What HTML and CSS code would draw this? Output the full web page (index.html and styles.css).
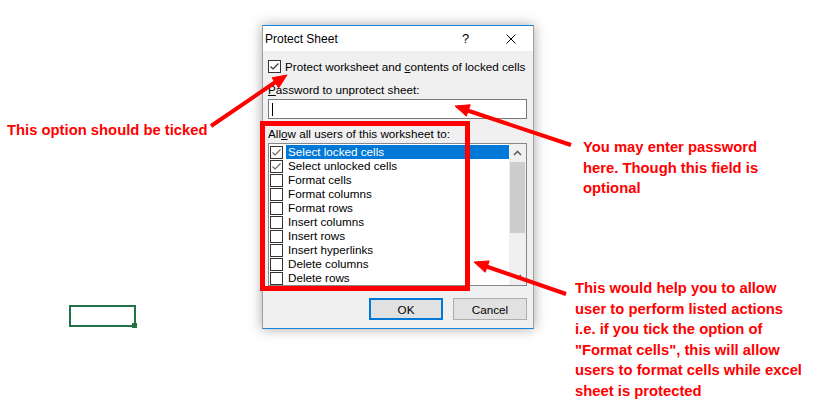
FILE: index.html
```html
<!DOCTYPE html>
<html>
<head>
<meta charset="utf-8">
<link rel="stylesheet" href="styles.css">
</head>
<body>
<div class="canvas">
  <div class="cell"><span class="handle"></span></div>

  <div class="dialog">
    <div class="titlebar">
      <span class="title">Protect Sheet</span>
      <span class="tbtn help">?</span>
      <span class="tbtn close"><svg width="10" height="10" viewBox="0 0 10 10"><path d="M0.5 0.5 L9.5 9.5 M9.5 0.5 L0.5 9.5" stroke="#000" stroke-width="1"/></svg></span>
    </div>
    <div class="body">
      <div class="topcheck">
        <span class="cb dark"><svg width="11" height="11" viewBox="0 0 11 11"><polyline points="1.5,5.5 4,8 9.5,2.5" fill="none" stroke="#333" stroke-width="1.2"/></svg></span>
        <span>Protect worksheet and <u>c</u>ontents of locked cells</span>
      </div>
      <div class="label"><u>P</u>assword to unprotect sheet:</div>
      <div class="input"><span class="caret"></span></div>
      <div class="label allow">All<u>o</u>w all users of this worksheet to:</div>
      <div class="list">
        <div class="items">
          <div class="item"><span class="cb"><svg width="11" height="11" viewBox="0 0 11 11"><polyline points="1.5,5.5 4,8 9.5,2.5" fill="none" stroke="#666" stroke-width="1.1"/></svg></span><span class="txt sel">Select locked cells</span></div>
          <div class="item"><span class="cb"><svg width="11" height="11" viewBox="0 0 11 11"><polyline points="1.5,5.5 4,8 9.5,2.5" fill="none" stroke="#666" stroke-width="1.1"/></svg></span><span class="txt">Select unlocked cells</span></div>
          <div class="item"><span class="cb"></span><span class="txt">Format cells</span></div>
          <div class="item"><span class="cb"></span><span class="txt">Format columns</span></div>
          <div class="item"><span class="cb"></span><span class="txt">Format rows</span></div>
          <div class="item"><span class="cb"></span><span class="txt">Insert columns</span></div>
          <div class="item"><span class="cb"></span><span class="txt">Insert rows</span></div>
          <div class="item"><span class="cb"></span><span class="txt">Insert hyperlinks</span></div>
          <div class="item"><span class="cb"></span><span class="txt">Delete columns</span></div>
          <div class="item"><span class="cb"></span><span class="txt">Delete rows</span></div>
        </div>
        <div class="scroll">
          <span class="sbtn"><svg width="9" height="6" viewBox="0 0 9 6"><polyline points="1,5 4.5,1.5 8,5" fill="none" stroke="#606060" stroke-width="1.6"/></svg></span>
          <span class="thumb"></span>
          <span class="track"></span>
          <span class="sbtn"><svg width="9" height="6" viewBox="0 0 9 6"><polyline points="1,1 4.5,4.5 8,1" fill="none" stroke="#606060" stroke-width="1.6"/></svg></span>
        </div>
      </div>
      <div class="buttons">
        <button class="btn ok">OK</button>
        <button class="btn">Cancel</button>
      </div>
    </div>
  </div>

  <div class="redbox"></div>

  <svg class="arrows" width="824" height="416" viewBox="0 0 824 416">
    <g stroke="#ff0000" stroke-width="4" fill="#ff0000" stroke-linecap="butt">
      <line x1="211" y1="126" x2="277" y2="81"/>
      <polygon points="287,75 278.7,87.8 272.1,77.8" stroke-width="1"/>
      <line x1="571" y1="145" x2="466" y2="110"/>
      <polygon points="455,106 470.2,104.8 466.4,116.2" stroke-width="1"/>
      <line x1="566" y1="294" x2="485" y2="266"/>
      <polygon points="474,262 489.2,260.9 485.2,272.3" stroke-width="1"/>
    </g>
  </svg>

  <div class="note n1">This option should be ticked</div>
  <div class="note n2">You may enter password<br>here. Though this field is<br>optional</div>
  <div class="note n3">This would help you to allow<br>user to perform listed actions<br>i.e. if you tick the option of<br>"Format cells", this will allow<br>users to format cells while excel<br>sheet is protected</div>
</div>
</body>
</html>
```

FILE: styles.css
```css
body {
  margin: 0;
  background: #fff;
}

.canvas {
  position: relative;
  width: 824px;
  height: 416px;
  background: #fff;
  overflow: hidden;
}

.cell {
  position: absolute;
  left: 69px;
  top: 305px;
  width: 67px;
  height: 22px;
  box-sizing: border-box;
  border: 2px solid #217346;
}

.handle {
  position: absolute;
  right: -4px;
  bottom: -4px;
  width: 5px;
  height: 5px;
  background: #217346;
  border: 1px solid #fff;
  border-top: none;
  border-left: none;
}

.dialog {
  position: absolute;
  left: 262px;
  top: 25px;
  width: 272px;
  height: 304px;
  box-sizing: border-box;
  border: 1px solid #a0a0a0;
  border-top-color: #1883d7;
  border-bottom-color: #1883d7;
  background: #f0f0f0;
  box-shadow: 0 0 12px rgba(0, 0, 0, 0.35);
  font-family: "Liberation Sans", Arial, sans-serif;
  font-size: 11.7px;
  color: #000;
  display: flex;
  flex-direction: column;
}

.titlebar {
  height: 25px;
  background: #fff;
  display: flex;
  align-items: center;
  font-size: 12px;
}

.title {
  flex: 1;
  padding-left: 2px;
}

.tbtn {
  width: 45px;
  height: 25px;
  display: flex;
  align-items: center;
  justify-content: center;
}

.help {
  font-size: 13px;
}

.body {
  padding: 9px 6px 0 5px;
  display: flex;
  flex-direction: column;
}

.topcheck {
  display: flex;
  align-items: center;
  gap: 4px;
  height: 13px;
  white-space: nowrap;
}

.cb {
  width: 13px;
  height: 13px;
  box-sizing: border-box;
  border: 1px solid #333;
  background: #fff;
  flex: none;
  display: block;
}

.cb svg {
  display: block;
}

.label {
  margin-top: 10px;
  line-height: 14px;
  height: 14px;
  white-space: nowrap;
}

.label.allow {
  margin-top: 8px;
}

.input {
  margin-top: 2px;
  height: 20px;
  box-sizing: border-box;
  border: 1px solid #7a7a7a;
  background: #fff;
  display: flex;
  align-items: center;
}

.caret {
  display: block;
  width: 1px;
  height: 13px;
  margin-left: 3px;
  background: #000;
}

.list {
  margin-top: 2px;
  height: 143px;
  box-sizing: border-box;
  border: 1px solid #828790;
  background: #fff;
  display: flex;
}

.items {
  flex: 1;
  padding-top: 1px;
}

.item {
  height: 14px;
  display: flex;
  align-items: center;
  padding-left: 1px;
}

.txt {
  flex: 1;
  margin-left: 3px;
  height: 14px;
  line-height: 14px;
  padding-left: 2px;
  white-space: nowrap;
}

.txt.sel {
  background: #0078d7;
  color: #fff;
}

.scroll {
  width: 17px;
  background: #f0f0f0;
  display: flex;
  flex-direction: column;
}

.sbtn {
  height: 17px;
  display: flex;
  align-items: center;
  justify-content: center;
  flex: none;
}

.thumb {
  height: 71px;
  margin: 1px 1px 0 1px;
  background: #cdcdcd;
  flex: none;
}

.track {
  flex: 1;
}

.buttons {
  margin-top: 12px;
  display: flex;
  justify-content: flex-end;
  gap: 10px;
}

.btn {
  width: 74px;
  height: 22px;
  box-sizing: border-box;
  border: 1px solid #adadad;
  background: #e1e1e1;
  font-family: "Liberation Sans", Arial, sans-serif;
  font-size: 11.7px;
  color: #000;
  padding: 0;
}

.btn.ok {
  border: 2px solid #0078d7;
}

.redbox {
  position: absolute;
  left: 260px;
  top: 121px;
  width: 210px;
  height: 170px;
  box-sizing: border-box;
  border: 5px solid #ff0000;
}

.arrows {
  position: absolute;
  left: 0;
  top: 0;
  pointer-events: none;
}

.note {
  position: absolute;
  font-family: "Liberation Sans", Arial, sans-serif;
  font-weight: bold;
  font-size: 14.8px;
  line-height: 20.5px;
  color: #ff0000;
  white-space: nowrap;
}

.n1 {
  left: 7px;
  top: 120px;
}

.n2 {
  left: 583px;
  top: 137px;
}

.n3 {
  left: 575px;
  top: 278px;
}
```
